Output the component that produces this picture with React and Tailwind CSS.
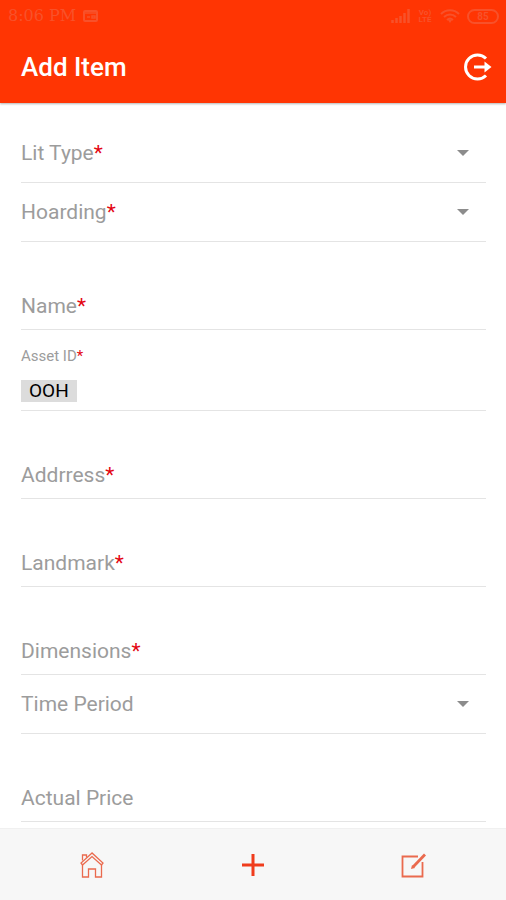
import { useState } from 'react';

function Label({ id, text, required, className }) {
  return (
    <label htmlFor={id} className={className}>
      {text}
      {required && <span className="text-[#e30613]">*</span>}
    </label>
  );
}

function SelectField({ id, text, required, options }) {
  const [value, setValue] = useState('');

  return (
    <div className="grid items-center border-b border-[#e4e4e4] h-[59px]">
      {!value && (
        <Label
          id={id}
          text={text}
          required={required}
          className="col-start-1 row-start-1 text-[21px] leading-6 text-[#9c9c9c]"
        />
      )}
      <svg viewBox="0 0 12 6" className="col-start-1 row-start-1 justify-self-end mr-[17px] w-3 h-[6px] fill-[#8c8c8c]">
        <path d="M0 0h12L6 6z" />
      </svg>
      <select
        id={id}
        aria-label={text}
        value={value}
        onChange={(e) => setValue(e.target.value)}
        className="col-start-1 row-start-1 w-full h-full appearance-none bg-transparent text-[21px] text-black outline-none"
      >
        <option value=""></option>
        {options.map((option) => (
          <option key={option} value={option}>{option}</option>
        ))}
      </select>
    </div>
  );
}

function TextField({ id, text, required }) {
  const [value, setValue] = useState('');

  return (
    <div className="grid items-end border-b border-[#e4e4e4] h-22 pb-[11px]">
      {!value && (
        <Label
          id={id}
          text={text}
          required={required}
          className="col-start-1 row-start-1 text-[21px] leading-6 text-[#9c9c9c]"
        />
      )}
      <input
        id={id}
        type="text"
        aria-label={text}
        value={value}
        onChange={(e) => setValue(e.target.value)}
        className="col-start-1 row-start-1 w-full h-6 bg-transparent text-[21px] leading-6 text-black outline-none"
      />
    </div>
  );
}

function StatusBar() {
  return (
    <div className="flex items-center justify-between h-8 pl-2 pr-[7px] text-[#f8512a]">
      <div className="flex items-center gap-[7px]">
        <span className="font-['DejaVu_Serif',serif] text-base leading-5">8:06 PM</span>
        <svg viewBox="0 0 15 12" className="w-[15px] h-3" fill="none" stroke="currentColor" strokeWidth="2">
          <rect x="1" y="1" width="13" height="10" rx="1" />
          <path d="M1 3h13M4 7h3M9 6h3v2H9z" strokeWidth="1.5" />
        </svg>
      </div>
      <div className="flex items-center gap-[7px]">
        <svg viewBox="0 0 19 14" className="w-[19px] h-[14px]" stroke="currentColor" strokeWidth="2.5">
          <path d="M1.5 14v-3M5.5 14v-5M9.5 14V7M13.5 14V4M17.5 14V0" />
        </svg>
        <span className="w-4 text-center font-['Roboto',sans-serif] text-[8px] leading-[7px] font-bold">
          Vo) LTE
        </span>
        <svg viewBox="0 0 20 14" className="w-5 h-[14px]" fill="none" stroke="currentColor" strokeWidth="2">
          <path d="M1 5c5-5 13-5 18 0M4 8c3.5-3.5 8.500-3.500 12 0M7 11c2-1.800 4-1.800 6 0" />
          <path d="M8 11h4l-2 3z" fill="currentColor" stroke="none" />
        </svg>
        <span className="w-8 h-[15px] rounded-full border-2 border-[#f8512a] text-center font-['Roboto',sans-serif] text-[10px] leading-[11px] font-bold">
          85
        </span>
      </div>
    </div>
  );
}

export default function App() {
  return (
    <div className="flex flex-col min-h-screen bg-white font-['Roboto',sans-serif]">
      <header className="bg-[#ff3503] pb-3 shadow-[0_1px_2px_rgba(0,0,0,0.3)]">
        <StatusBar />
        <div className="flex items-center justify-between h-[59px] pl-[21px] pr-[14px] pt-[10px]">
          <h1 className="text-[26px] leading-8 font-medium text-white">Add Item</h1>
          <button type="button" aria-label="Log out" className="text-white">
            <svg viewBox="0 0 28 28" className="w-7 h-7" fill="none" stroke="currentColor" strokeWidth="3">
              <path d="M22 5.500A12 12 0 1 0 22 22.500" />
              <path d="M10 14h12" strokeWidth="3" />
              <path d="M20.500 8.500l7 5.500-7 5.500z" fill="currentColor" stroke="none" />
            </svg>
          </button>
        </div>
      </header>

      <main className="flex-1 pl-[21px] pr-5 pt-[21px] pb-[6px]">
        <form>
          <SelectField id="litType" text="Lit Type" required options={['Front Lit', 'Back Lit', 'Non Lit']} />
          <SelectField id="hoarding" text="Hoarding" required options={['Billboard', 'Unipole', 'Gantry']} />
          <TextField id="name" text="Name" required />

          <div className="border-b border-[#e4e4e4] h-[81px] pt-4 pb-2 flex flex-col justify-between">
            <Label id="assetId" text="Asset ID" required className="text-[15px] leading-5 text-[#9c9c9c]" />
            <div className="flex items-center">
              <span className="bg-[#dcdcdc] px-2 text-[19px] leading-[22px] text-black">OOH</span>
              <input id="assetId" type="text" className="flex-1 min-w-0 h-5 bg-transparent pl-2 text-[19px] outline-none" />
            </div>
          </div>

          <TextField id="address" text="Addrress" required />
          <TextField id="landmark" text="Landmark" required />
          <TextField id="dimensions" text="Dimensions" required />
          <SelectField id="timePeriod" text="Time Period" options={['Weekly', 'Monthly', 'Yearly']} />
          <TextField id="actualPrice" text="Actual Price" />
        </form>
      </main>

      <nav className="sticky bottom-0 grid grid-cols-3 px-3 h-18 border-t border-[#f0f0f0] bg-[#f7f7f7] text-[#ea6a4e]">
        <a href="#home" aria-label="Home" className="flex items-center justify-center">
          <svg viewBox="0 0 24 26" className="w-6 h-[26px]" fill="none" stroke="currentColor" strokeWidth="1.300">
            <path d="M12 1L1 11l1.500 2L12 4.500 21.500 13l1.500-2z" />
            <path d="M2.500 8.500V3h4v2.500M2.500 13v12h6v-8h7v8h6V13" />
          </svg>
        </a>
        <a href="#add" aria-label="Add item" className="flex items-center justify-center text-[#f03c1c]">
          <svg viewBox="0 0 22 22" className="w-[22px] h-[22px]" fill="none" stroke="currentColor" strokeWidth="3">
            <path d="M11 0v22M0 11h22" />
          </svg>
        </a>
        <a href="#edit" aria-label="Edit" className="flex items-center justify-center">
          <svg viewBox="0 0 26 26" className="w-[26px] h-[26px]" fill="none" stroke="currentColor" strokeWidth="1.800">
            <path d="M17 4.500H1.500v20h20V10" />
            <path d="M12 15L24 2.500" strokeWidth="2.800" />
            <path d="M10 17l1-4 3 3z" fill="currentColor" stroke="none" />
          </svg>
        </a>
      </nav>
    </div>
  );
}
